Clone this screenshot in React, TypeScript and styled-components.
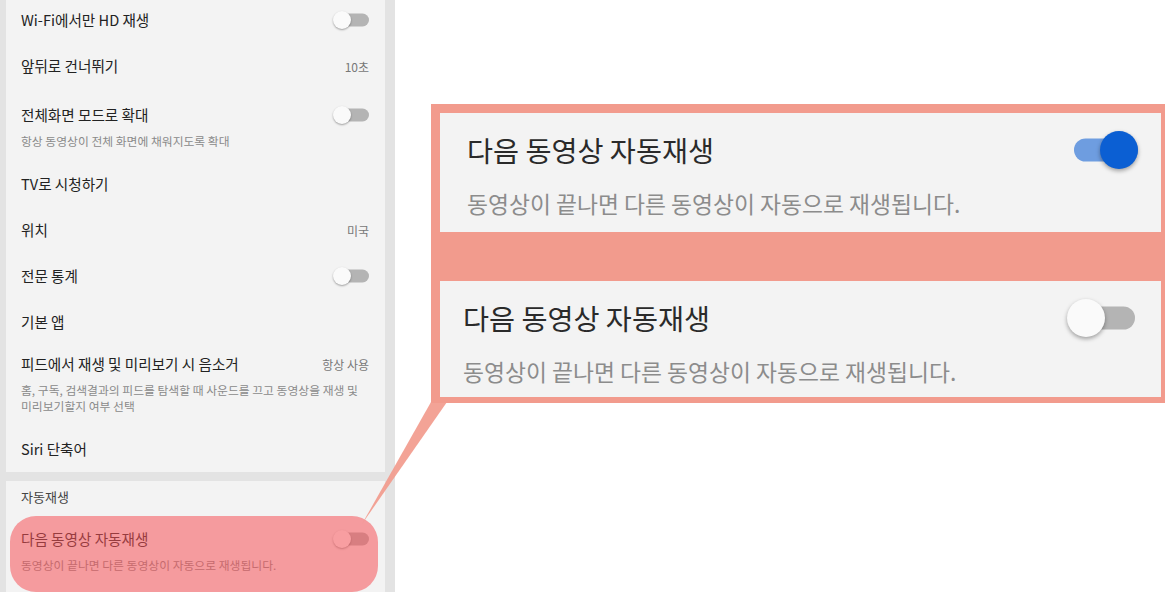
import React from "react"
import styled, { createGlobalStyle, css } from "styled-components"

const GlobalStyle = createGlobalStyle`
  html, body {
    margin: 0;
    padding: 0;
    background: #fff;
  }
  body {
    font-family: "Noto Sans CJK KR", "Noto Sans", sans-serif;
  }
`

const Page = styled.div`
  position: relative;
  display: flex;
  width: 1165px;
  height: 592px;
  overflow: hidden;
`

const Sidebar = styled.div`
  flex: none;
  width: 395px;
  box-sizing: border-box;
  background: #e3e3e3;
  padding: 0 10px 0 6px;
  display: flex;
  flex-direction: column;
  gap: 9px;
`

const Card = styled.div<{ $offset?: number }>`
  background: #f3f3f3;
  display: flex;
  flex-direction: column;
  padding: 0 16px 0 15px;
  margin-top: ${(p) => p.$offset ?? 0}px;
`

const Row = styled.div<{ $top?: number }>`
  display: flex;
  flex-direction: column;
  padding: ${(p) => p.$top ?? 12}px 0 12px;
`

const HighlightRow = styled(Row)`
  position: relative;
  margin-top: 11px;
  padding-bottom: 19px;

  &::after {
    content: "";
    position: absolute;
    top: 0;
    bottom: 0;
    left: -11px;
    right: -9px;
    border-radius: 26px;
    background: rgba(245, 82, 88, 0.55);
  }
`

const RowMain = styled.div`
  display: flex;
  align-items: center;
  justify-content: space-between;
  height: 22px;
`

const Title = styled.span`
  font-size: 14.6px;
  line-height: 22px;
  color: #222;
`

const Sub = styled.div`
  margin-top: 7px;
  font-size: 11.8px;
  line-height: 16px;
  color: #8a8a8a;
`

const Value = styled.span`
  font-size: 12px;
  color: #777;
`

const SectionHeader = styled.div`
  padding-top: 8px;
  font-size: 13px;
  line-height: 16px;
  color: #444;
`

const Stage = styled.div`
  flex: 1;
  padding: 104px 0 0 36px;
`

const Callout = styled.div`
  display: flex;
  flex-direction: column;
  gap: 49px;
  background: #f29b8d;
  border: solid #f29b8d;
  border-width: 9px 4px 6px 9px;
`

const Panel = styled.div<{ $h: number; $pad: string }>`
  height: ${(p) => p.$h}px;
  background: #f3f3f3;
  padding: ${(p) => p.$pad};
  display: flex;
  justify-content: space-between;
  align-items: flex-start;
`

const BigTitle = styled.div`
  padding-top: 22px;
  font-size: 28.3px;
  line-height: 30px;
  color: #2a2a2a;
`

const BigSub = styled.div`
  margin-top: 26px;
  font-size: 22.8px;
  line-height: 26px;
  color: #8c8c8c;
`

const SwitchBox = styled.div<{ $lg?: boolean }>`
  position: relative;
  flex: none;
  ${(p) =>
    p.$lg
      ? css`
          width: 68px;
          height: 38px;
          margin-top: 18px;
        `
      : css`
          width: 36px;
          height: 18px;
        `}
`

const Track = styled.div<{ $lg?: boolean; $on?: boolean }>`
  position: absolute;
  right: 0;
  left: ${(p) => (p.$lg ? 4 : 6)}px;
  top: 50%;
  transform: translateY(-50%);
  height: ${(p) => (p.$lg ? 23 : 13)}px;
  border-radius: 12px;
  background: ${(p) => (p.$on ? "#6e9de0" : "#b4b4b4")};
`

const Knob = styled.div<{ $lg?: boolean; $on?: boolean }>`
  position: absolute;
  top: 0;
  ${(p) => (p.$on ? "right: 0;" : "left: 0;")}
  width: ${(p) => (p.$lg ? 38 : 18)}px;
  height: ${(p) => (p.$lg ? 38 : 18)}px;
  border-radius: 50%;
  background: ${(p) => (p.$on ? "#0b5fd3" : "#fafafa")};
  box-shadow: 0 ${(p) => (p.$lg ? 2 : 1)}px ${(p) => (p.$lg ? 4 : 2)}px
    rgba(0, 0, 0, 0.35);
`

const Pointer = styled.svg`
  position: absolute;
  left: 0;
  top: 0;
  pointer-events: none;
`

type SwitchProps = { on?: boolean; lg?: boolean }

const Switch: React.FC<SwitchProps> = ({ on, lg }) => (
  <SwitchBox $lg={lg}>
    <Track $lg={lg} $on={on} />
    <Knob $lg={lg} $on={on} />
  </SwitchBox>
)

type SettingProps = {
  title: string
  sub?: React.ReactNode
  value?: string
  toggle?: boolean
  top?: number
}

const Setting: React.FC<SettingProps> = ({ title, sub, value, toggle, top }) => (
  <Row $top={top}>
    <RowMain>
      <Title>{title}</Title>
      {value && <Value>{value}</Value>}
      {toggle && <Switch />}
    </RowMain>
    {sub && <Sub>{sub}</Sub>}
  </Row>
)

const AUTOPLAY_TITLE = "다음 동영상 자동재생"
const AUTOPLAY_SUB = "동영상이 끝나면 다른 동영상이 자동으로 재생됩니다."

export default function App() {
  return (
    <>
      <GlobalStyle />
      <Page>
        <Sidebar>
          <Card $offset={-3}>
            <Setting title="Wi-Fi에서만 HD 재생" toggle />
            <Setting title="앞뒤로 건너뛰기" value="10초" />
            <Setting
              title="전체화면 모드로 확대"
              toggle
              top={15}
              sub="항상 동영상이 전체 화면에 채워지도록 확대"
            />
            <Setting title="TV로 시청하기" />
            <Setting title="위치" value="미국" />
            <Setting title="전문 통계" toggle />
            <Setting title="기본 앱" />
            <Setting
              title="피드에서 재생 및 미리보기 시 음소거"
              value="항상 사용"
              top={8}
              sub={
                <>
                  홈, 구독, 검색결과의 피드를 탐색할 때 사운드를 끄고 동영상을 재생 및
                  <br />
                  미리보기할지 여부 선택
                </>
              }
            />
            <Setting title="Siri 단축어" />
          </Card>
          <Card>
            <SectionHeader>자동재생</SectionHeader>
            <HighlightRow>
              <RowMain>
                <Title>{AUTOPLAY_TITLE}</Title>
                <Switch />
              </RowMain>
              <Sub>{AUTOPLAY_SUB}</Sub>
            </HighlightRow>
          </Card>
        </Sidebar>

        <Stage>
          <Callout>
            <Panel $h={119} $pad="0 23px 0 27px">
              <div>
                <BigTitle>{AUTOPLAY_TITLE}</BigTitle>
                <BigSub>{AUTOPLAY_SUB}</BigSub>
              </div>
              <Switch lg on />
            </Panel>
            <Panel $h={116} $pad="0 26px 0 23px">
              <div>
                <BigTitle>{AUTOPLAY_TITLE}</BigTitle>
                <BigSub>{AUTOPLAY_SUB}</BigSub>
              </div>
              <Switch lg />
            </Panel>
          </Callout>
        </Stage>

        <Pointer width="1165" height="592">
          <polygon points="431,402 447,402 362,524" fill="#f29b8d" opacity="0.92" />
        </Pointer>
      </Page>
    </>
  )
}
